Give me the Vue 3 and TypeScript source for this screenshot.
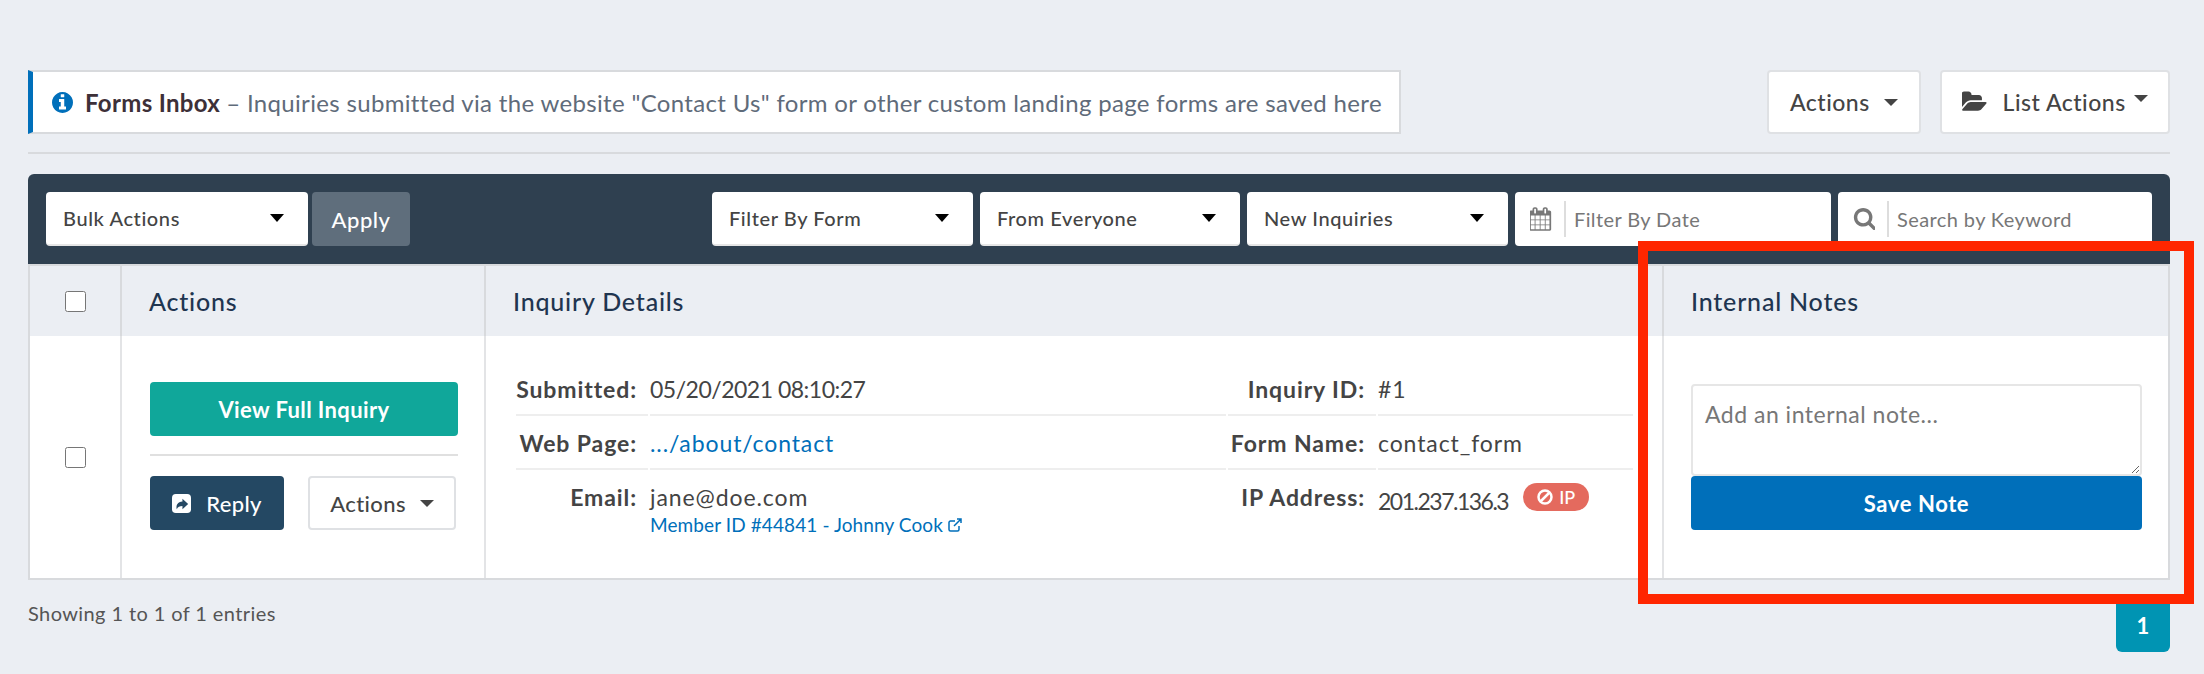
<script setup lang="ts">
const filters = ["Filter By Form", "From Everyone", "New Inquiries"];

const leftDetails = [
  { label: "Submitted:", value: "05/20/2021 08:10:27", tight: "tight-date" },
  { label: "Web Page:", value: ".../about/contact", tight: "link" },
  { label: "Email:", value: "jane@doe.com", member: "Member ID #44841 - Johnny Cook" },
];

const rightDetails = [
  { label: "Inquiry ID:", value: "#1" },
  { label: "Form Name:", value: "contact_form" },
  { label: "IP Address:", value: "201.237.136.3", tight: "tight-ip", badge: true },
];
</script>

<template>
  <div class="page">
    <div class="top-row">
      <div class="notice">
        <svg class="info-icon" viewBox="128 128 1536 1536">
          <path d="M1152 1376v-160q0-14-9-23t-23-9h-96v-512q0-14-9-23t-23-9h-320q-14 0-23 9t-9 23v160q0 14 9 23t23 9h96v320h-96q-14 0-23 9t-9 23v160q0 14 9 23t23 9h448q14 0 23-9t9-23zm-128-896v-160q0-14-9-23t-23-9h-192q-14 0-23 9t-9 23v160q0 14 9 23t23 9h192q14 0 23-9t9-23zm640 416q0 209-103 385.500t-279.500 279.500-385.500 103-385.500-103-279.500-279.500-103-385.500 103-385.500 279.500-279.500 385.500-103 385.500 103 279.500 279.500 103 385.500z" />
        </svg>
        <strong>Forms Inbox</strong>
        <span class="notice-text">– Inquiries submitted via the website "Contact Us" form or other custom landing page forms are saved here</span>
      </div>
      <div class="top-actions">
        <button class="top-btn actions-btn">Actions <span class="caret"></span></button>
        <button class="top-btn list-btn">
          <svg class="folder-icon" viewBox="0 128 1920 1536">
            <path d="M1815 952q0 31-31 66l-336 396q-43 51-120.500 86.500t-143.500 35.500h-1088q-34 0-60.500-13t-26.500-43q0-31 31-66l336-396q43-51 120.500-86.500t143.500-35.500h1088q34 0 60.500 13t26.500 43zm-343-344v160h-832q-94 0-197 47.500t-164 119.500l-337 396-5 6q0-4-.5-12.500t-.5-12.500v-960q0-92 66-158t158-66h320q92 0 158 66t66 158v32h544q92 0 158 66t66 158z" />
          </svg>
          List Actions<span class="caret caret-up"></span>
        </button>
      </div>
    </div>

    <hr class="divider" />

    <div class="toolbar">
      <div class="select bulk">Bulk Actions <span class="arrow"></span></div>
      <button class="apply">Apply</button>
      <div class="filters">
        <div v-for="f in filters" :key="f" class="select">{{ f }} <span class="arrow"></span></div>
        <div class="input-box date-box">
          <svg class="box-icon" viewBox="128 64 1664 1664">
            <path d="M192 1664h288v-288h-288v288zm352 0h320v-288h-320v288zm-352-352h288v-320h-288v320zm352 0h320v-320h-320v320zm-352-384h288v-288h-288v288zm736 736h320v-288h-320v288zm-384-736h320v-288h-320v288zm768 736h288v-288h-288v288zm-384-352h320v-320h-320v320zm-352-864v-288q0-13-9.500-22.500t-22.500-9.500h-64q-13 0-22.500 9.500t-9.500 22.500v288q0 13 9.500 22.500t22.500 9.500h64q13 0 22.500-9.500t9.500-22.500zm736 864h288v-320h-288v320zm-384-384h320v-288h-320v288zm384 0h288v-288h-288v288zm32-480v-288q0-13-9.500-22.500t-22.500-9.500h-64q-13 0-22.500 9.500t-9.500 22.500v288q0 13 9.500 22.500t22.500 9.500h64q13 0 22.500-9.500t9.500-22.500zm384-64v1280q0 52-38 90t-90 38h-1408q-52 0-90-38t-38-90v-1280q0-52 38-90t90-38h128v-96q0-66 47-113t113-47h64q66 0 113 47t47 113v96h384v-96q0-66 47-113t113-47h64q66 0 113 47t47 113v96h128q52 0 90 38t38 90z" />
          </svg>
          <span class="box-text">Filter By Date</span>
        </div>
        <div class="input-box search-box">
          <svg class="box-icon" viewBox="0 128 1664 1664">
            <path d="M1216 832q0-185-131.500-316.500t-316.500-131.500-316.500 131.500-131.500 316.500 131.500 316.500 316.500 131.500 316.500-131.500 131.500-316.500zm512 832q0 52-38 90t-90 38q-54 0-90-38l-343-342q-179 124-399 124-143 0-273.500-55.500t-225-150-150-225-55.500-273.500 55.500-273.500 150-225 225-150 273.500-55.500 273.500 55.500 225 150 150 225 55.500 273.500q0 220-124 399l343 343q37 37 37 90z" />
          </svg>
          <span class="box-text">Search by Keyword</span>
        </div>
      </div>
    </div>

    <div class="table">
      <div class="head check-cell"><input type="checkbox" class="check" /></div>
      <div class="head">Actions</div>
      <div class="head">Inquiry Details</div>
      <div class="head">Internal Notes</div>

      <div class="cell check-cell"><input type="checkbox" class="check" /></div>
      <div class="cell actions-cell">
        <button class="view-btn">View Full Inquiry</button>
        <hr class="action-line" />
        <div class="action-row">
          <button class="reply-btn">
            <svg class="reply-icon" viewBox="0 0 20 20">
              <rect width="20" height="20" rx="4" fill="#fff" />
              <path d="M5 16c-1-4 1-8 6-8V5l6 5.500-6 5.500v-3.500c-3 0-5 1-6 3.500z" fill="#244863" />
            </svg>
            Reply
          </button>
          <button class="small-actions">Actions <span class="caret"></span></button>
        </div>
      </div>
      <div class="cell details-cell">
        <div class="details">
          <div v-for="d in leftDetails" :key="d.label" class="detail-row left-row">
            <div class="detail-label">{{ d.label }}</div>
            <div class="detail-value">
              <span :class="d.tight">{{ d.value }}</span>
              <div v-if="d.member" class="member">
                {{ d.member }}
                <svg class="ext-icon" viewBox="0 0 14 14">
                  <path d="M11 8v3.500a1.500 1.500 0 0 1-1.500 1.500h-7A1.500 1.500 0 0 1 1 11.500v-7A1.500 1.500 0 0 1 2.500 3H7M9 1h4v4M13 1 6 8" fill="none" stroke="#006fba" stroke-width="1.500" />
                </svg>
              </div>
            </div>
          </div>
        </div>
        <div class="details">
          <div v-for="d in rightDetails" :key="d.label" class="detail-row right-row">
            <div class="detail-label">{{ d.label }}</div>
            <div class="detail-value">
              <span :class="d.tight">{{ d.value }}</span>
              <span v-if="d.badge" class="badge">
                <svg class="ban-icon" viewBox="0 0 16 16">
                  <circle cx="8" cy="8" r="6.500" fill="none" stroke="#fff" stroke-width="2.500" />
                  <path d="M3.500 12.500 12.500 3.500" stroke="#fff" stroke-width="2.500" />
                </svg>
                IP
              </span>
            </div>
          </div>
        </div>
      </div>
      <div class="cell notes-cell">
        <textarea class="note-input" placeholder="Add an internal note..."></textarea>
        <button class="save-btn">Save Note</button>
      </div>
    </div>

    <div class="footer-row">
      <span class="entries">Showing 1 to 1 of 1 entries</span>
      <span class="page-num">1</span>
    </div>

    <div class="red-box"></div>
  </div>
</template>

<style>
body {
  background: #ebeef3;
}
</style>

<style scoped>
.page {
  position: relative;
  box-sizing: border-box;
  width: 2204px;
  height: 674px;
  padding: 70px 34px 0 28px;
  background: #ebeef3;
  font-family: Lato, "Open Sans", sans-serif;
  color: #444;
  overflow: hidden;
}

button {
  font-family: inherit;
  cursor: pointer;
}

.top-row {
  display: flex;
  justify-content: space-between;
  height: 64px;
}

.notice {
  box-sizing: border-box;
  display: flex;
  align-items: center;
  width: 1373px;
  background: #fff;
  border: 2px solid #d8dadd;
  border-left: 5px solid #006fba;
  padding-left: 19px;
  font-size: 24px;
  letter-spacing: 0.33px;
  color: #5f6b7a;
  white-space: nowrap;
}

.notice strong {
  margin: 0 6px 0 12px;
  color: #3d3038;
  font-weight: 700;
}

.info-icon {
  width: 21px;
  height: 21px;
  fill: #006fba;
}

.top-actions {
  display: flex;
  gap: 19px;
}

.top-btn {
  display: flex;
  align-items: center;
  justify-content: center;
  box-sizing: border-box;
  height: 64px;
  background: #fff;
  border: 2px solid #dfe1e4;
  border-radius: 4px;
  font-size: 23px;
  letter-spacing: 0.5px;
  font-weight: 500;
  color: #444;
  white-space: pre;
}

.actions-btn {
  width: 154px;
}

.list-btn {
  width: 230px;
}

.folder-icon {
  width: 26px;
  height: 22px;
  margin-right: 8px;
  fill: #444;
}

.caret {
  display: inline-block;
  margin-left: 8px;
  border-left: 7px solid transparent;
  border-right: 7px solid transparent;
  border-top: 7px solid #444;
}

.caret-up {
  margin-left: 8px;
  margin-top: -8px;
}

.divider {
  margin: 18px 0 20px;
  border: 0;
  border-top: 2px solid #d8dadd;
}

.toolbar {
  display: flex;
  align-items: center;
  box-sizing: border-box;
  height: 90px;
  padding: 0 18px;
  background: #2f4050;
  border-radius: 6px 6px 0 0;
}

.select {
  box-sizing: border-box;
  display: flex;
  align-items: center;
  justify-content: space-between;
  width: 261px;
  height: 54px;
  padding: 0 24px 0 17px;
  background: #fff;
  border-bottom: 2px solid #e6e6e6;
  border-radius: 4px;
  font-size: 20px;
  letter-spacing: 0.6px;
  font-weight: 500;
  color: #444;
}

.filters .select:nth-child(2) {
  width: 260px;
}

.bulk {
  width: 262px;
}

.arrow {
  border-left: 7px solid transparent;
  border-right: 7px solid transparent;
  border-top: 8px solid #000;
}

.apply {
  width: 98px;
  height: 54px;
  margin-left: 4px;
  background: #5f6e7c;
  border: 0;
  border-radius: 4px;
  color: #fff;
  font-size: 22px;
  letter-spacing: 0.5px;
  font-weight: 500;
}

.filters {
  display: flex;
  gap: 7px;
  margin-left: auto;
}

.input-box {
  box-sizing: border-box;
  display: flex;
  align-items: center;
  height: 54px;
  padding-left: 15px;
  background: #fff;
  border-radius: 4px;
  font-size: 20px;
  letter-spacing: 0.4px;
  color: #777;
}

.date-box {
  width: 316px;
}

.search-box {
  width: 314px;
}

.box-icon {
  width: 22px;
  height: 24px;
  fill: #777;
}

.box-text {
  display: flex;
  align-items: center;
  height: 36px;
  margin-left: 12px;
  padding-left: 8px;
  border-left: 2px solid #ddd;
}

.table {
  display: grid;
  grid-template-columns: 92px 364px 1178px 504px;
  grid-template-rows: 70px 242px;
  border: 2px solid #d8dadd;
}

.head {
  display: flex;
  align-items: center;
  padding-left: 27px;
  border-right: 2px solid #d8dadd;
  font-size: 25px;
  letter-spacing: 0.8px;
  font-weight: 500;
  color: #1f3550;
}

.head:nth-child(4) {
  border-right: 0;
}

.cell {
  background: #fff;
  border-right: 2px solid #e3e4e6;
}

.check-cell {
  display: flex;
  align-items: center;
  justify-content: center;
  padding: 0;
  box-sizing: border-box;
}

.check {
  width: 21px;
  height: 21px;
  margin: 0;
}

.actions-cell {
  box-sizing: border-box;
  padding: 46px 26px 0 28px;
}

.view-btn {
  display: block;
  width: 100%;
  height: 54px;
  background: #10a79a;
  border: 0;
  border-radius: 4px;
  color: #fff;
  font-size: 22px;
  letter-spacing: 0.4px;
  font-weight: 700;
}

.action-line {
  margin: 18px 0 20px;
  border: 0;
  border-top: 2px solid #e0e0e0;
}

.action-row {
  display: flex;
  gap: 24px;
}

.reply-btn {
  display: flex;
  align-items: center;
  justify-content: center;
  gap: 15px;
  width: 134px;
  height: 54px;
  background: #244863;
  border: 0;
  border-radius: 4px;
  color: #fff;
  font-size: 22px;
  letter-spacing: 0.3px;
  font-weight: 500;
}

.reply-icon {
  width: 19px;
  height: 19px;
}

.small-actions {
  display: flex;
  align-items: center;
  justify-content: center;
  white-space: pre;
  width: 148px;
  height: 54px;
  background: #fff;
  border: 2px solid #dfe1e4;
  border-radius: 4px;
  color: #444;
  font-size: 22px;
  letter-spacing: 0.4px;
  font-weight: 500;
}

.details-cell {
  box-sizing: border-box;
  display: flex;
  padding: 26px 0 0 30px;
}

.details {
  width: 710px;
}

.details + .details {
  width: 405px;
  margin-left: 2px;
}

.detail-row {
  display: grid;
  column-gap: 2px;
  min-height: 54px;
  box-sizing: border-box;
  font-size: 23px;
  letter-spacing: 0.9px;
}

.left-row {
  grid-template-columns: 132px 1fr;
}

.right-row {
  grid-template-columns: 148px 1fr;
}

.detail-label,
.detail-value {
  box-sizing: border-box;
  padding-top: 13px;
  border-bottom: 2px solid #eee;
  white-space: nowrap;
  color: #444;
}

.detail-row:last-child .detail-label,
.detail-row:last-child .detail-value {
  border-bottom: 0;
}

.detail-label {
  padding-right: 11px;
  text-align: right;
  font-weight: 700;
  letter-spacing: 0.9px;
}

.tight-date {
  letter-spacing: -0.5px;
}

.tight-ip {
  letter-spacing: -1.5px;
}

.link {
  color: #006fba;
}

.member {
  margin-top: 2px;
  font-size: 19px;
  letter-spacing: 0.1px;
  color: #006fba;
}

.ext-icon {
  width: 14px;
  height: 14px;
}

.badge {
  display: inline-flex;
  align-items: center;
  justify-content: center;
  gap: 6px;
  width: 66px;
  height: 28px;
  margin-left: 15px;
  background: #e46a5e;
  border-radius: 14px;
  color: #fff;
  font-size: 18px;
  font-weight: 500;
  letter-spacing: 0;
  vertical-align: 5px;
}

.ban-icon {
  width: 16px;
  height: 16px;
}

.notes-cell {
  box-sizing: border-box;
  padding: 48px 26px 0 27px;
  border-right: 0;
}

.note-input {
  display: block;
  box-sizing: border-box;
  width: 100%;
  height: 92px;
  padding: 14px 12px;
  border: 2px solid #e6e6e6;
  border-radius: 4px;
  font-family: inherit;
  font-size: 23px;
  letter-spacing: 0.5px;
  outline: none;
}

.note-input::placeholder {
  color: #777;
}

.save-btn {
  display: block;
  width: 100%;
  height: 54px;
  background: #006fba;
  border: 0;
  border-radius: 4px;
  color: #fff;
  font-size: 22px;
  letter-spacing: 0.6px;
  font-weight: 700;
}

.footer-row {
  display: flex;
  justify-content: space-between;
  padding-top: 18px;
}

.entries {
  padding-top: 3px;
  font-size: 20px;
  letter-spacing: 0.4px;
  color: #555;
}

.page-num {
  display: flex;
  align-items: center;
  justify-content: center;
  width: 54px;
  height: 54px;
  background: #0094b3;
  border-radius: 0 0 6px 6px;
  color: #fff;
  font-size: 22px;
  font-weight: 700;
}

/* annotation over the screenshot */
.red-box {
  position: absolute;
  left: 1638px;
  top: 241px;
  width: 556px;
  height: 363px;
  box-sizing: border-box;
  border: 10px solid #ff2600;
}
</style>
